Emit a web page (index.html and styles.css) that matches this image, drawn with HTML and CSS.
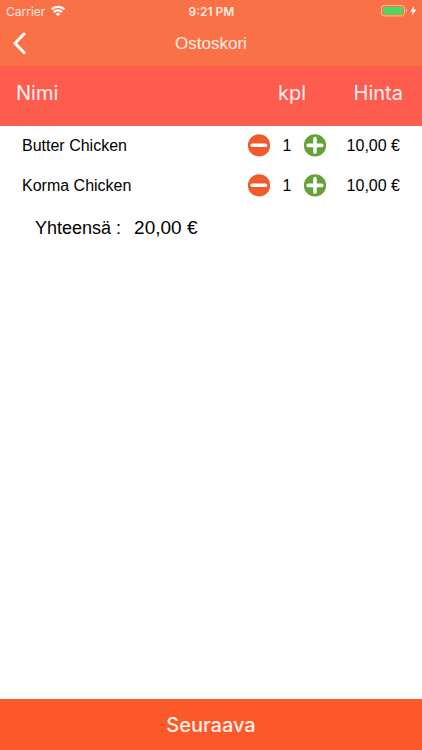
FILE: index.html
```html
<!DOCTYPE html>
<html lang="fi">
<head>
<meta charset="utf-8">
<meta name="viewport" content="width=device-width, initial-scale=1">
<title>Ostoskori</title>
<link rel="stylesheet" href="styles.css">
</head>
<body>
<svg class="sprite" aria-hidden="true">
  <symbol id="minus" viewBox="0 0 24 24"><circle cx="12" cy="11.4" r="11.1" fill="#f15a2b"/><path d="M5.2 11.2h13.4" stroke="#fff" stroke-width="3.4" stroke-linecap="round"/></symbol>
  <symbol id="plus" viewBox="0 0 24 24"><circle cx="12" cy="11.4" r="11.1" fill="#64a136"/><path d="M5.2 11.4h13.6M12 4.6v13.6" stroke="#fff" stroke-width="3.6" stroke-linecap="round"/></symbol>
</svg>
<header class="top">
  <div class="status">
    <div class="carrier">
      <span>Carrier</span>
      <svg width="16" height="12" viewBox="0 0 16 12" fill="none" stroke="#fff" stroke-width="2.2"><path d="M1.6 4.4a9.2 9.2 0 0 1 12.8 0"/><path d="M4 7.1a5.7 5.7 0 0 1 8 0"/><path d="M8 11.2 5.7 8.9a3.3 3.3 0 0 1 4.6 0z" fill="#fff" stroke="none"/></svg>
    </div>
    <span class="clock">9:21 PM</span>
    <div class="power">
      <svg width="36" height="12" viewBox="0 0 36 12"><rect x=".5" y=".5" width="23" height="10.4" rx="2.5" fill="none" stroke="#fdb793"/><rect x="2" y="2" width="20" height="7.4" rx="1" fill="#4cd964"/><path d="M25 4v3.6q1.3-.5 1.3-1.8T25 4z" fill="#fdc5aa"/><path d="M33.2.8 29.4 6.4h2.4l-1 4.4 4.4-6h-2.6z" fill="#fff"/></svg>
    </div>
  </div>
  <nav class="bar">
    <button class="back" type="button" aria-label="Takaisin">
      <svg width="14" height="24" viewBox="0 0 14 24" fill="none" stroke="#fff" stroke-width="3" stroke-linecap="round"><path d="M12 2 3 11.3l9 9.2"/></svg>
    </button>
    <h1 class="title">Ostoskori</h1>
  </nav>
</header>
<main class="content">
  <table class="cart">
    <thead>
      <tr><th class="name">Nimi</th><th class="count">kpl</th><th class="price">Hinta</th></tr>
    </thead>
    <tbody>
      <tr>
        <td class="name">Butter Chicken</td>
        <td class="count"><div class="stepper">
          <button type="button" aria-label="Vähennä"><svg><use href="#minus"/></svg></button>
          <span>1</span>
          <button type="button" aria-label="Lisää"><svg><use href="#plus"/></svg></button>
        </div></td>
        <td class="price">10,00 €</td>
      </tr>
      <tr>
        <td class="name">Korma Chicken</td>
        <td class="count"><div class="stepper">
          <button type="button" aria-label="Vähennä"><svg><use href="#minus"/></svg></button>
          <span>1</span>
          <button type="button" aria-label="Lisää"><svg><use href="#plus"/></svg></button>
        </div></td>
        <td class="price">10,00 €</td>
      </tr>
    </tbody>
  </table>
  <p class="total"><span>Yhteensä :</span><span class="sum">20,00 €</span></p>
</main>
<button class="next" type="button">Seuraava</button>
</body>
</html>
```

FILE: styles.css
```css
* {
  box-sizing: border-box;
}

body {
  margin: 0;
  min-height: 100vh;
  display: flex;
  flex-direction: column;
  background: #fff;
  color: #000;
  font-family: "Liberation Sans", Arial, sans-serif;
  font-size: 16px;
}

button {
  border: 0;
  padding: 0;
  background: none;
  font: inherit;
  cursor: pointer;
}

svg {
  display: block;
}

.sprite {
  position: absolute;
  width: 0;
  height: 0;
}

.top {
  background: #fb7147;
  color: #fff;
}

.status {
  display: grid;
  grid-template-columns: 1fr auto 1fr;
  align-items: center;
  height: 22px;
  padding: 0 5px 0 6px;
  font-family: Inter, sans-serif;
  font-size: 12px;
  color: #ffe9df;
}

.carrier {
  display: flex;
  align-items: center;
  gap: 5px;
}

.clock {
  font-weight: 600;
}

.power {
  display: flex;
  justify-content: flex-end;
}

.bar {
  display: grid;
  grid-template-columns: 40px 1fr 40px;
  align-items: center;
  height: 44px;
}

.back {
  display: flex;
  align-items: center;
  height: 44px;
  padding-left: 12px;
}

.title {
  margin: 0;
  font-size: 17px;
  font-weight: 400;
  text-align: center;
  color: #ffece3;
}

.content {
  flex: 1;
}

.cart {
  width: 100%;
  border-collapse: collapse;
  table-layout: fixed;
}

.cart th {
  height: 60px;
  padding: 0 0 6px;
  background: #ff5c50;
  color: #fff0ee;
  font-family: Inter, sans-serif;
  font-size: 20px;
  font-weight: 400;
}

.cart td {
  height: 40px;
  padding: 0;
}

.cart .name {
  text-align: left;
}

.cart th.name {
  padding-left: 16px;
}

.cart td.name {
  padding-left: 22px;
}

.cart .count {
  width: 102px;
}

.cart th.count {
  padding-left: 10px;
}

.cart .price {
  width: 84px;
  text-align: right;
  white-space: nowrap;
}

.cart th.price {
  padding-right: 19px;
}

.cart td.price {
  padding-right: 22px;
}

.stepper {
  display: flex;
  align-items: center;
  justify-content: center;
  gap: 12px;
}

.stepper svg {
  width: 24px;
  height: 24px;
}

.total {
  display: flex;
  align-items: baseline;
  gap: 13px;
  margin: 0;
  padding: 12px 35px;
  font-size: 18px;
  line-height: 20px;
}

.sum {
  font-size: 19px;
}

.next {
  height: 51px;
  background: #fc5829;
  color: #fff0e8;
  font-family: Inter, sans-serif;
  font-size: 20px;
  font-weight: 500;
}
```
